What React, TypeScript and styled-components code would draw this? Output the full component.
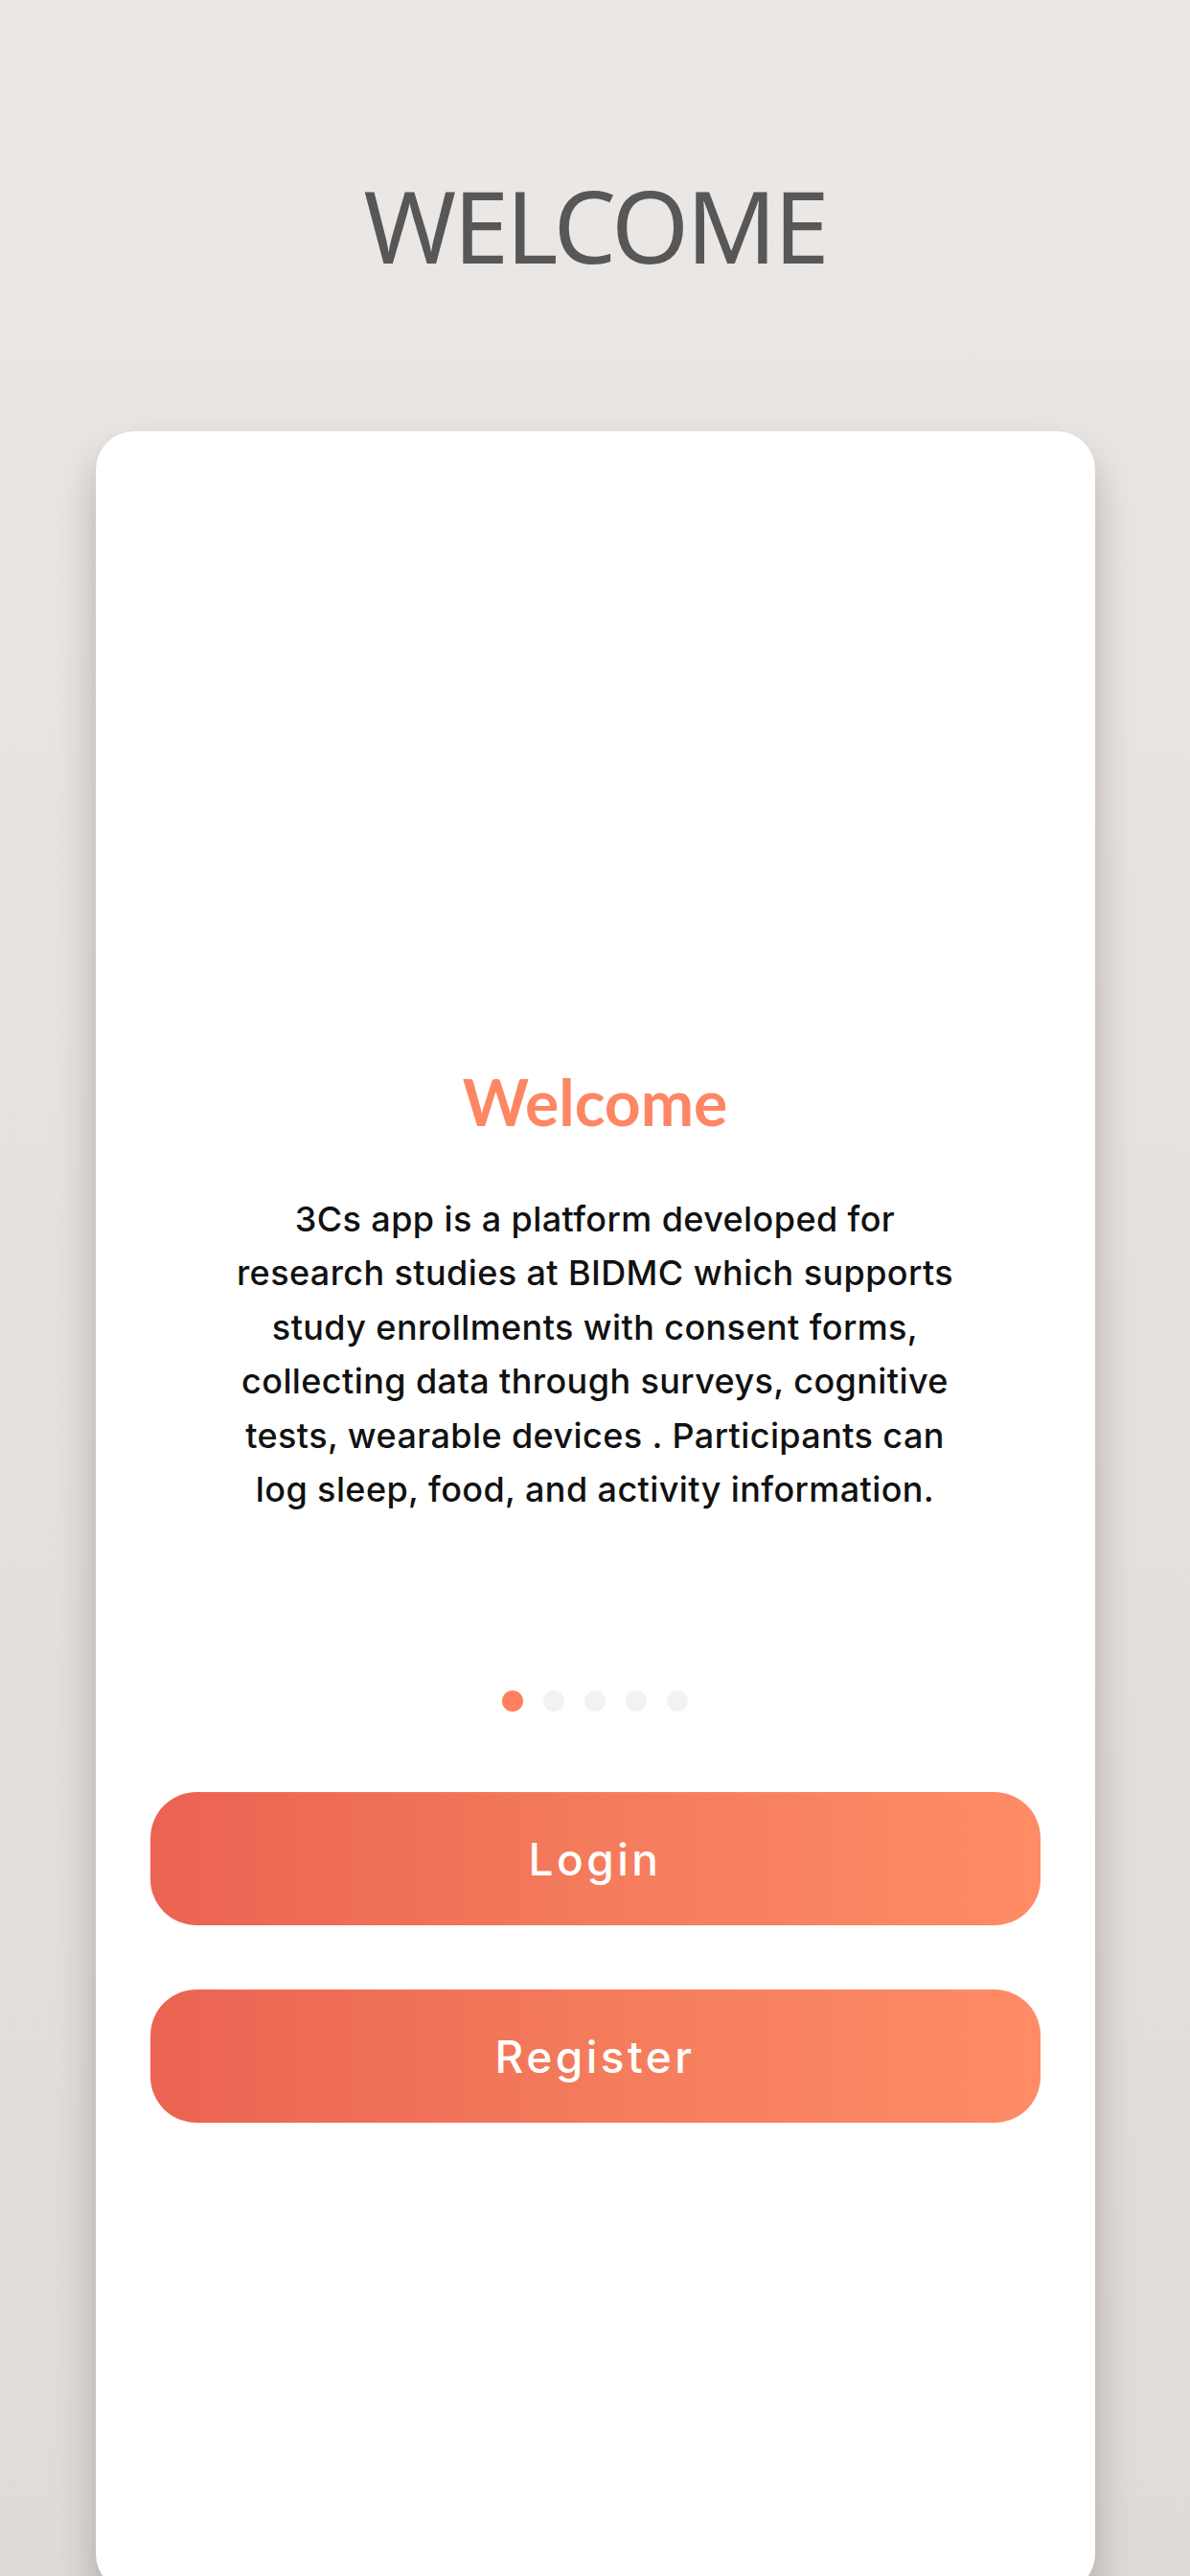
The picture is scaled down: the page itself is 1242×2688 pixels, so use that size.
import React from "react";
import styled, { createGlobalStyle } from "styled-components";

const GlobalStyle = createGlobalStyle`
    html, body {
        margin: 0;
        padding: 0;
    }
    body {
        font-family: "Noto Sans", Arial, sans-serif;
        -webkit-font-smoothing: antialiased;
    }
`;

const slides = [0, 1, 2, 3, 4];

function App() {
    return (
        <>
            <GlobalStyle />
            <Page>
                <Title>WELCOME</Title>
                <Card>
                    <ImageArea />
                    <SlideTitle>Welcome</SlideTitle>
                    <SlideText>
                        3Cs app is a platform developed for
                        <br />
                        research studies at BIDMC which supports
                        <br />
                        study enrollments with consent forms,
                        <br />
                        collecting data through surveys, cognitive
                        <br />
                        tests, wearable devices . Participants can
                        <br />
                        log sleep, food, and activity information.
                    </SlideText>
                    <Dots>
                        {slides.map((i) => (
                            <Dot key={i} $active={i === 0} />
                        ))}
                    </Dots>
                    <Buttons>
                        <ActionButton>Login</ActionButton>
                        <ActionButton>Register</ActionButton>
                    </Buttons>
                </Card>
            </Page>
        </>
    );
}

const Page = styled.div`
    width: 1242px;
    height: 2688px;
    overflow: hidden;
    display: flex;
    flex-direction: column;
    align-items: center;
    background: linear-gradient(180deg, #ebe8e5 0%, #e5e1de 50%, #dfdbd8 100%);
`;

const Title = styled.h1`
    margin: 170px 0 0 0;
    height: 130px;
    font-family: "Noto Sans", Arial, sans-serif;
    font-weight: 400;
    font-size: 104px;
    line-height: 130px;
    color: #575757;
    letter-spacing: -3px;
`;

const Card = styled.div`
    margin-top: 150px;
    width: 1043px;
    height: 2255px;
    flex-shrink: 0;
    display: flex;
    flex-direction: column;
    align-items: center;
    background: #ffffff;
    border-radius: 40px;
    box-shadow: 0 24px 40px rgba(70, 60, 55, 0.32);
`;

const ImageArea = styled.div`
    height: 660px;
    width: 100%;
`;

const SlideTitle = styled.h2`
    margin: 0;
    font-family: Lato, "Noto Sans", sans-serif;
    font-weight: 700;
    font-size: 66px;
    line-height: 80px;
    color: #fd8663;
`;

const SlideText = styled.p`
    margin: 54px 0 0 0;
    font-family: Inter, "Noto Sans", sans-serif;
    font-weight: 500;
    font-size: 36px;
    line-height: 56.4px;
    letter-spacing: 0.4px;
    text-align: center;
    color: #111111;
`;

const Dots = styled.div`
    margin-top: 182px;
    display: flex;
    gap: 21px;
`;

const Dot = styled.span<{ $active?: boolean }>`
    width: 22px;
    height: 22px;
    border-radius: 50%;
    background: ${(p) => (p.$active ? "#fe805f" : "#f2f2f2")};
`;

const Buttons = styled.div`
    margin-top: 84px;
    width: 929px;
    display: flex;
    flex-direction: column;
    gap: 67px;
`;

const ActionButton = styled.button`
    height: 139px;
    border: none;
    border-radius: 48px;
    background: linear-gradient(90deg, #eb6352 0%, #f47b5c 50%, #fe8c66 100%);
    color: #ffffff;
    font-family: Inter, "Noto Sans", sans-serif;
    font-weight: 500;
    font-size: 46px;
    letter-spacing: 3.5px;
    cursor: pointer;
`;

export default App;
